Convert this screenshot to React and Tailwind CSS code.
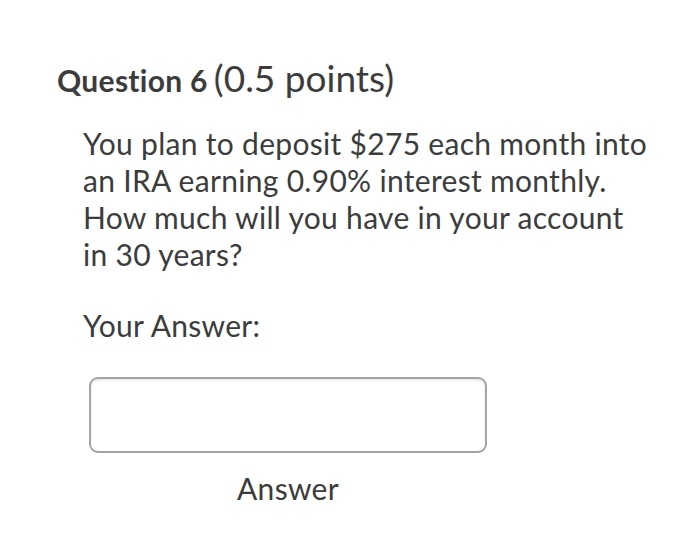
import React from "react";

const App = () => {
  return (
    <div className="w-[700px] h-[560px] bg-white text-[#3c3c3c] font-['Lato',sans-serif] pt-[56px] pl-[57px]">
      <div className="flex items-baseline leading-[44px]">
        <span className="font-bold text-[30px] tracking-[0.3px]">Question 6</span>
        <span className="ml-[6px] text-[37px]">(0.5 points)</span>
      </div>
      <div className="pl-[26px] mt-[23px]">
        <p className="text-[30px] leading-[37px] tracking-[0.3px] whitespace-nowrap">
          You plan to deposit $275 each month into
          <br />
          an IRA earning 0.90% interest monthly.
          <br />
          How much will you have in your account
          <br />
          in 30 years?
        </p>
        <p className="text-[30px] leading-[37px] tracking-[0.3px] mt-[34px]">Your Answer:</p>
        <div className="w-[398px] ml-[6px] mt-[33px] flex flex-col items-center">
          <div className="w-full h-[76px] border-2 border-[#a3a3a3] rounded-[9px] bg-white shadow-[inset_0_2px_2px_rgba(0,0,0,0.08)]"></div>
          <span className="text-[30px] leading-[37px] tracking-[0.3px] mt-[17px]">Answer</span>
        </div>
      </div>
    </div>
  );
};

export default App;
